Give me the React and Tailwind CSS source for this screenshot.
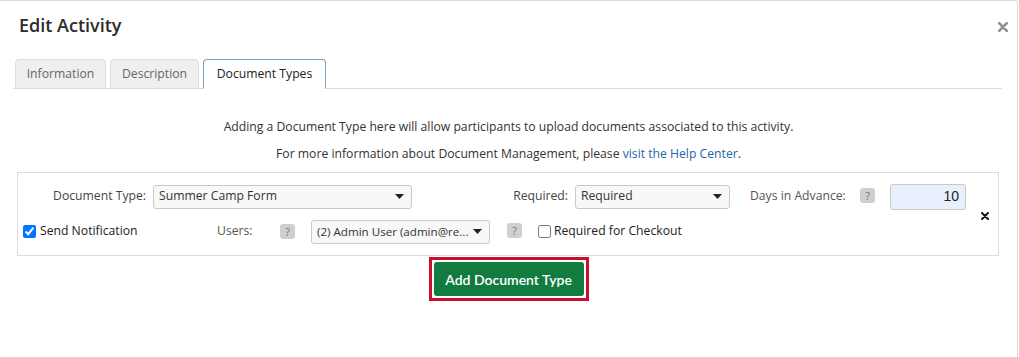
import React from 'react';

const Help = () => (
  <span className="inline-flex items-center justify-center w-[15px] h-[15px] rounded-[3px] bg-[#cfcfcf] text-[11px] leading-none text-[#5b7ea3]">
    ?
  </span>
);

const Caret = () => (
  <svg width="9" height="5" viewBox="0 0 9 5" className="shrink-0">
    <path d="M0 0h9L4.5 5z" fill="#222" />
  </svg>
);

const FakeSelect = ({ value, className }) => (
  <div
    className={`flex items-center justify-between pl-[5px] pr-[7px] border border-[#c9c9c9] rounded-[3px] bg-[#f8f8f8] text-[#333] ${className}`}
  >
    <span className="whitespace-nowrap">{value}</span>
    <Caret />
  </div>
);

const Tab = ({ label, active }) => (
  <div
    className={`flex items-center justify-center h-[30px] rounded-t-[4px] border text-[12.2px] -mb-px ${
      active
        ? 'bg-white border-[#6fa3cf] border-b-white text-[#222]'
        : 'bg-[#efefef] border-[#dcdcdc] text-[#666]'
    }`}
  >
    {label}
  </div>
);

export default function App() {
  return (
    <div className="w-[1018px] h-[357px] bg-white border-t border-r border-[#dadada] rounded-tr-[4px] font-['Open_Sans',sans-serif]">
      {/* header */}
      <div className="flex items-start justify-between pl-[19px] pr-[9px] pt-[11px]">
        <h1 className="text-[18px] leading-[26px] font-semibold text-[#2b2b2b]">Edit Activity</h1>
        <svg width="10" height="10" viewBox="0 0 10 10" className="mt-[10px]">
          <path d="M1.2 1.2l7.6 7.6M8.8 1.2L1.2 8.8" stroke="#8f8f8f" strokeWidth="2.6" strokeLinecap="round" />
        </svg>
      </div>

      {/* tabs */}
      <div className="ml-[13px] mr-[15px] mt-[21px] pl-[2px] flex gap-[4px] border-b border-[#dcdcdc]">
        <div className="w-[91px]"><Tab label="Information" /></div>
        <div className="w-[89px]"><Tab label="Description" /></div>
        <div className="w-[123px]"><Tab label="Document Types" active /></div>
      </div>

      {/* intro text */}
      <div className="mt-[29px] text-center text-[12.2px] leading-[18px] text-[#333]">
        <p>Adding a Document Type here will allow participants to upload documents associated to this activity.</p>
        <p className="mt-[9px]">
          For more information about Document Management, please{' '}
          <span className="text-[#2465a8]">visit the Help Center</span>.
        </p>
      </div>

      {/* document type panel */}
      <div className="ml-[17px] w-[982px] mt-[9px] border border-[#dcdcdc] flex items-center pt-[11px] pb-[12px] pr-[9px]">
        <div className="flex-1 flex flex-col gap-[11px]">
          <div className="flex items-center h-[25px] text-[12.2px] text-[#444]">
            <span className="w-[128px] text-right">Document Type:</span>
            <FakeSelect value="Summer Camp Form" className="ml-[7px] w-[259px] h-[24px] text-[12.2px]" />
            <span className="w-[156px] text-right">Required:</span>
            <FakeSelect value="Required" className="ml-[7px] w-[155px] h-[24px] text-[12.2px]" />
            <span className="ml-[20px] w-[96px] whitespace-nowrap text-[#555]">Days in Advance:</span>
            <span className="ml-[14px]"><Help /></span>
            <div className="ml-[15px] w-[76px] h-[26px] flex items-center justify-end pr-[6px] rounded-[3px] border border-[#c9c9c9] bg-[#e8f0fe] font-['Liberation_Sans',sans-serif] text-[14px] text-[#222]">
              10
            </div>
          </div>
          <div className="flex items-center h-[23px] text-[12.2px] text-[#333]">
            <input type="checkbox" checked readOnly className="ml-[5px] w-[13px] h-[13px] accent-[#0075ff]" />
            <span className="ml-[4px] w-[177px] font-medium text-[#222]">Send Notification</span>
            <span className="w-[63px] text-[#555]">Users:</span>
            <Help />
            <FakeSelect value="(2) Admin User (admin@re..." className="ml-[16px] w-[179px] h-[24px] text-[11.6px]" />
            <span className="ml-[17px]"><Help /></span>
            <input type="checkbox" readOnly className="ml-[16px] w-[13px] h-[13px]" />
            <span className="ml-[3px] text-[#222]">Required for Checkout</span>
          </div>
        </div>
        <svg width="8" height="8" viewBox="0 0 8 8" className="mt-[4px]">
          <path d="M1 1l6 6M7 1L1 7" stroke="#111" strokeWidth="2" strokeLinecap="round" />
        </svg>
      </div>

      {/* add button */}
      <div className="flex justify-center mt-px">
        <div className="border-[3px] border-[#c8102e] p-[2px]">
          <button className="w-[150px] h-[34px] rounded-[3px] bg-[#127c40] text-white text-[14px] font-semibold font-['Lato',sans-serif]">
            Add Document Type
          </button>
        </div>
      </div>
    </div>
  );
}
